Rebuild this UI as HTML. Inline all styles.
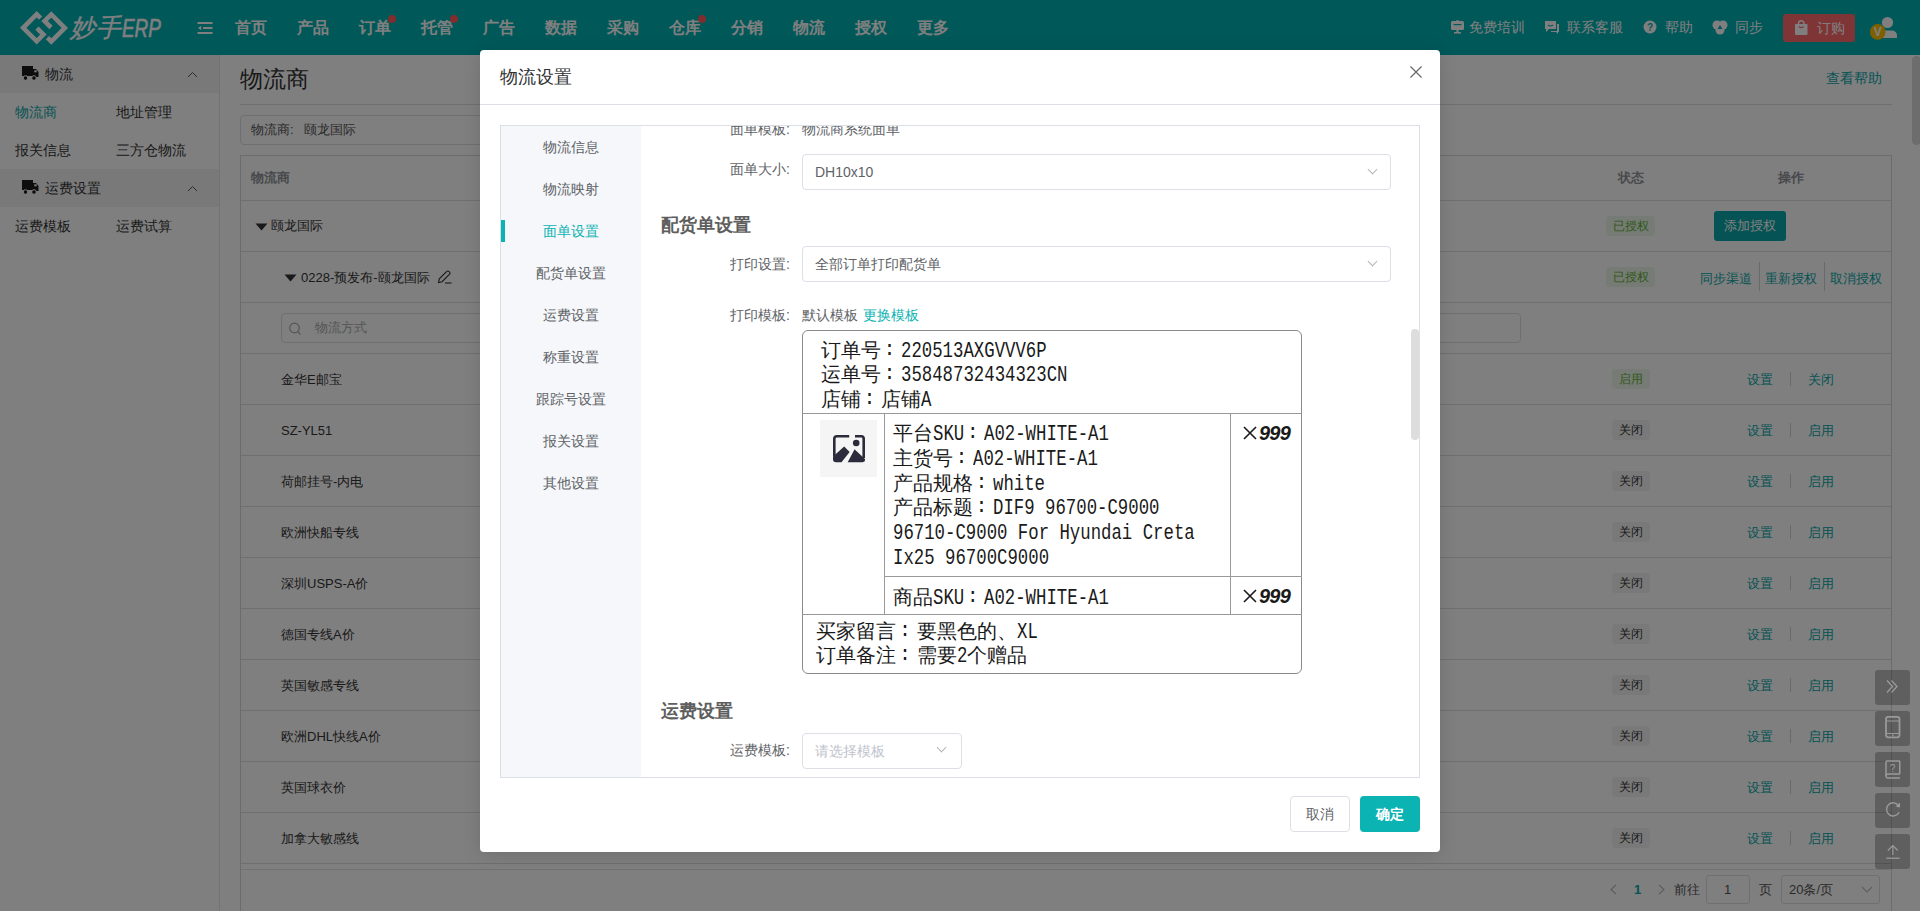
<!DOCTYPE html>
<html><head><meta charset="utf-8">
<style>
*{box-sizing:border-box;margin:0;padding:0}
html,body{width:1920px;height:911px;overflow:hidden;background:#fff;font-family:"Liberation Sans",sans-serif;font-size:14px;color:#333}
.abs{position:absolute}
.t{position:absolute;white-space:nowrap;line-height:1}
/* header */
#hdr{position:absolute;left:0;top:0;width:1920px;height:55px;background:#02b1b3}
.nav{position:absolute;top:19px;font-size:16px;font-weight:bold;color:#fff;line-height:18px}
.dot{position:absolute;width:8px;height:8px;border-radius:50%;background:#ff5a5a}
.hr{position:absolute;top:19px;font-size:14px;color:#fff;line-height:16px}
/* sidebar */
#side{position:absolute;left:0;top:55px;width:220px;height:856px;background:#fff;border-right:1px solid #e6e6e6}
.sgrp{position:absolute;left:0;width:219px;height:38px;background:#f2f3f5}
.sitem{position:absolute;font-size:14px;color:#333;line-height:16px}
/* main */
.cell{position:absolute;font-size:13px;color:#333;line-height:15px;white-space:nowrap;margin-top:1.5px}
.hline{position:absolute;height:1px;background:#dcdfe6}
.tag{position:absolute;height:20px;line-height:20px;font-size:12px;text-align:center;border-radius:4px;margin-top:-0.5px}
.tag.g{background:#eef7ea;color:#5fb236}
.tag.off{background:#f2f2f2;color:#333}
.lnk{position:absolute;font-size:13px;color:#0aa7a9;line-height:15px;white-space:nowrap;margin-top:1.5px}
.sep{position:absolute;width:1px;height:14px;background:#d0d3da;margin-top:1px}
.fb{position:absolute;left:1875px;width:35px;height:35px;border-radius:3px;background:rgba(0,0,0,.25)}
.fb svg{display:block}
#overlay{position:absolute;left:0;top:0;width:1920px;height:911px;background:rgba(0,0,0,.5)}
/* modal */
#modal{position:absolute;left:480px;top:50px;width:960px;height:802px;background:#fff;border-radius:4px;box-shadow:0 3px 18px rgba(0,0,0,.13)}
.mnav{position:absolute;left:0;width:140px;text-align:center;font-size:14px;color:#606266;line-height:16px}
.lbl{position:absolute;font-size:14px;color:#606266;line-height:16px;text-align:right;white-space:nowrap}
.sel{position:absolute;height:36px;border:1px solid #dcdfe6;border-radius:4px;background:#fff}
.sel .v{position:absolute;left:12px;top:9px;font-size:14px;color:#606266;line-height:16px;white-space:nowrap}
.chev{position:absolute;width:7px;height:7px;border-right:1px solid #b4b4b4;border-bottom:1px solid #b4b4b4;transform:rotate(45deg)}
.cn{display:inline-block;width:20.5px;font-family:"Liberation Mono",monospace;font-size:20px;text-indent:3px;vertical-align:top}
.pv{position:absolute;font-size:20px;color:#1a1a1a;line-height:24.5px;white-space:nowrap;font-family:"Liberation Sans",sans-serif}
.m{display:inline-block;vertical-align:top;overflow:visible}.m i{display:inline-block;font-style:normal;font-family:"Liberation Mono",monospace;font-size:22px;transform:scaleX(.788);transform-origin:0 0}
</style></head><body>

<!-- ============ HEADER ============ -->
<div id="hdr">
<svg class="abs" style="left:0;top:0" width="70" height="55" viewBox="0 0 70 55">
<g fill="none" stroke="#fff" stroke-width="4.6" stroke-linejoin="miter">
<polyline points="40.6,18.1 36.7,14.2 23.2,27.8 36.7,41.3 43.4,34.6 37,28.2"/>
<polyline points="47.4,37.6 51.3,41.5 64.8,27.9 51.3,14.4 44.6,21.1 51,27.5"/>
</g></svg>
<div class="t" style="left:70px;top:15px;font-size:25px;color:#fff;font-style:italic;letter-spacing:0.5px;-webkit-text-stroke:0.3px #fff">妙手</div><div class="t" style="left:122px;top:16px;font-size:25.5px;color:#fff;font-style:italic;transform:scaleX(.74);transform-origin:0 0;-webkit-text-stroke:0.6px #fff">ERP</div>
<svg class="abs" style="left:196px;top:21px" width="18" height="14" viewBox="0 0 18 14">
<rect x="1.5" y="1" width="15" height="2" fill="#fff"/><rect x="7" y="6" width="9.5" height="2" fill="#fff"/><rect x="1.5" y="11" width="15" height="2" fill="#fff"/>
<polygon points="2,7 5.2,4.8 5.2,9.2" fill="#fff"/></svg>
<div class="nav" style="left:235px">首页</div><div class="nav" style="left:297px">产品</div><div class="nav" style="left:359px">订单</div><div class="nav" style="left:421px">托管</div><div class="nav" style="left:483px">广告</div><div class="nav" style="left:545px">数据</div><div class="nav" style="left:607px">采购</div><div class="nav" style="left:669px">仓库</div><div class="nav" style="left:731px">分销</div><div class="nav" style="left:793px">物流</div><div class="nav" style="left:855px">授权</div><div class="nav" style="left:917px">更多</div>
<div class="dot" style="left:388px;top:15px"></div>
<div class="dot" style="left:450px;top:15px"></div>
<div class="dot" style="left:698px;top:15px"></div>
<!-- right items -->
<svg class="abs" style="left:1451px;top:20px" width="13" height="14" viewBox="0 0 13 14"><rect x="0" y="1" width="13" height="9" rx="1.5" fill="#fff"/><rect x="2.5" y="4" width="8" height="1.2" fill="#02b1b3"/><rect x="5.5" y="10" width="2" height="2.5" fill="#fff"/><rect x="3" y="12" width="7" height="1.5" fill="#fff"/><rect x="5.5" y="0" width="2" height="1.5" fill="#fff"/></svg>
<div class="hr" style="left:1469px">免费培训</div>
<svg class="abs" style="left:1544px;top:20px" width="16" height="15" viewBox="0 0 16 15"><path d="M1 1h11v8H5l-3 3V9H1z" fill="#fff"/><path d="M13 4h2v8h-1v2l-2-2H7v-1h6z" fill="#fff"/><path d="M4 5q2.5 2 5 0" stroke="#02b1b3" stroke-width="1.2" fill="none"/></svg>
<div class="hr" style="left:1567px">联系客服</div>
<svg class="abs" style="left:1643px;top:20px" width="14" height="14" viewBox="0 0 14 14"><circle cx="7" cy="7" r="6.5" fill="#fff"/><text x="7" y="11" font-size="10" font-weight="bold" text-anchor="middle" fill="#02b1b3" font-family="Liberation Sans">?</text></svg>
<div class="hr" style="left:1665px">帮助</div>
<svg class="abs" style="left:1712px;top:20px" width="16" height="15" viewBox="0 0 16 15"><circle cx="5" cy="5" r="4.5" fill="#fff"/><circle cx="11" cy="5" r="4.5" fill="#fff"/><circle cx="8" cy="10" r="4.5" fill="#fff"/><polygon points="8,5 10.5,9 5.5,9" fill="#02b1b3"/></svg>
<div class="hr" style="left:1735px">同步</div>
<div class="abs" style="left:1783px;top:14px;width:72px;height:28px;border-radius:3px;background:#ff6b6b"></div>
<svg class="abs" style="left:1795px;top:20px" width="13" height="15" viewBox="0 0 13 15"><rect x="0" y="4" width="12.5" height="11" rx="1" fill="#fff"/><path d="M3.5 6V3.5a2.75 2.75 0 0 1 5.5 0V6" stroke="#fff" stroke-width="1.4" fill="none"/><path d="M4 6.5q2.25 2.5 4.5 0" stroke="#ff6b6b" stroke-width="1.2" fill="none"/></svg>
<div class="hr" style="left:1817px;top:20px">订购</div>
<svg class="abs" style="left:1867px;top:16px" width="34" height="30" viewBox="0 0 34 30"><circle cx="20.5" cy="6.5" r="5.6" fill="#fff"/><path d="M13 22v-2.4a5 5 0 0 1 5-5h7a5 5 0 0 1 5 5V22z" fill="#fff"/><circle cx="10.75" cy="15.9" r="7.8" fill="#ffc000"/><text x="10.75" y="20.3" font-size="12" font-weight="bold" text-anchor="middle" fill="#fff" font-family="Liberation Sans">V</text></svg>
</div>

<!-- ============ SIDEBAR ============ -->
<div id="side">
<div class="sgrp" style="top:0"><svg class="abs" style="left:22px;top:11px" width="17" height="15" viewBox="0 0 17 15"><rect x="0" y="0" width="11" height="10" fill="#1a1a1a"/><path d="M11 3h3l2.5 3v5H11z" fill="#1a1a1a"/><rect x="12.3" y="4.3" width="2.4" height="2" fill="#fff"/><circle cx="3.5" cy="12" r="2.3" fill="#1a1a1a" stroke="#fff" stroke-width="1"/><circle cx="12" cy="12" r="2.3" fill="#1a1a1a" stroke="#fff" stroke-width="1"/></svg><div class="sitem" style="left:45px;top:11px">物流</div><svg class="abs" style="left:187px;top:16px" width="11" height="7" viewBox="0 0 11 7"><polyline points="1,6 5.5,1.5 10,6" fill="none" stroke="#555" stroke-width="1"/></svg></div>
<div class="sitem" style="left:15px;top:49px;color:#0aa7a9">物流商</div>
<div class="sitem" style="left:116px;top:49px">地址管理</div>
<div class="sitem" style="left:15px;top:87px">报关信息</div>
<div class="sitem" style="left:116px;top:87px">三方仓物流</div>
<div class="sgrp" style="top:114px"><svg class="abs" style="left:22px;top:11px" width="17" height="15" viewBox="0 0 17 15"><rect x="0" y="0" width="11" height="10" fill="#1a1a1a"/><path d="M11 3h3l2.5 3v5H11z" fill="#1a1a1a"/><rect x="12.3" y="4.3" width="2.4" height="2" fill="#fff"/><circle cx="3.5" cy="12" r="2.3" fill="#1a1a1a" stroke="#fff" stroke-width="1"/><circle cx="12" cy="12" r="2.3" fill="#1a1a1a" stroke="#fff" stroke-width="1"/></svg><div class="sitem" style="left:45px;top:11px">运费设置</div><svg class="abs" style="left:187px;top:16px" width="11" height="7" viewBox="0 0 11 7"><polyline points="1,6 5.5,1.5 10,6" fill="none" stroke="#555" stroke-width="1"/></svg></div>
<div class="sitem" style="left:15px;top:163px">运费模板</div>
<div class="sitem" style="left:116px;top:163px">运费试算</div>
</div>

<!-- ============ MAIN ============ -->
<div id="main">
<div class="abs" style="left:220px;top:55px;width:1692px;height:856px;background:#fff"></div>
<div class="t" style="left:240px;top:68px;font-size:23px;color:#333">物流商</div>
<div class="t" style="left:1826px;top:71px;font-size:14px;color:#0aa7a9">查看帮助</div>
<div class="abs" style="left:240px;top:104px;width:1652px;height:1px;background:#dcdfe6"></div>
<div class="abs" style="left:240px;top:115px;width:700px;height:30px;border:1px solid #dcdfe6;border-radius:4px"></div>
<div class="cell" style="left:251px;top:120.5px;color:#555">物流商:&nbsp;&nbsp;&nbsp;颐龙国际</div>
<!-- table -->
<div class="abs" style="left:240px;top:155px;width:1652px;height:756px;border:1px solid #d6d8de;border-bottom:none"></div>
<div class="cell" style="left:251px;top:168px;font-weight:bold;color:#909399">物流商</div>
<div class="cell" style="left:1618px;top:168px;font-weight:bold;color:#909399">状态</div>
<div class="cell" style="left:1778px;top:168px;font-weight:bold;color:#909399">操作</div>
<div class="hline" style="left:241px;top:200px;width:1650px"></div>
<svg class="abs" style="left:255px;top:223px" width="13" height="8" viewBox="0 0 13 8"><polygon points="0.5,0.5 12.5,0.5 6.5,7.5" fill="#333"/></svg>
<div class="cell" style="left:271px;top:216.5px">颐龙国际</div>
<div class="tag g" style="left:1606px;top:216.5px;width:49px">已授权</div>
<div class="abs" style="left:1714px;top:211px;width:72px;height:30px;border-radius:3px;background:#0aa7a9;color:#fff;font-size:13px;line-height:30px;text-align:center">添加授权</div>
<div class="hline" style="left:241px;top:251px;width:1650px"></div>
<svg class="abs" style="left:284px;top:274px" width="13" height="8" viewBox="0 0 13 8"><polygon points="0.5,0.5 12.5,0.5 6.5,7.5" fill="#333"/></svg>
<div class="cell" style="left:301px;top:268px">0228-预发布-颐龙国际</div>
<svg class="abs" style="left:436px;top:269px" width="16" height="15" viewBox="0 0 16 15"><path d="M2.5 13.5l0.8-3.6 7.5-7.5a1.4 1.4 0 0 1 2 0l0.8 0.8a1.4 1.4 0 0 1 0 2l-7.5 7.5z" fill="none" stroke="#333" stroke-width="1.1"/><line x1="9" y1="14" x2="15.5" y2="14" stroke="#333" stroke-width="1.1"/></svg>
<div class="tag g" style="left:1606px;top:267.5px;width:49px">已授权</div>
<div class="lnk" style="left:1700px;top:269px">同步渠道</div><div class="sep" style="left:1759px;top:262px;height:29px;margin-top:0"></div>
<div class="lnk" style="left:1765px;top:269px">重新授权</div><div class="sep" style="left:1824px;top:262px;height:29px;margin-top:0"></div>
<div class="lnk" style="left:1830px;top:269px">取消授权</div>
<div class="hline" style="left:241px;top:302px;width:1650px"></div>
<div class="abs" style="left:281px;top:313px;width:1240px;height:30px;border:1px solid #dcdfe6;border-radius:4px"></div>
<svg class="abs" style="left:288px;top:322px" width="14" height="14" viewBox="0 0 14 14"><circle cx="6.5" cy="6" r="4.8" fill="none" stroke="#aaa" stroke-width="1.2"/><line x1="9.7" y1="9.7" x2="12.5" y2="12.5" stroke="#aaa" stroke-width="1.2"/></svg>
<div class="cell" style="left:315px;top:318.5px;color:#aaa">物流方式</div>
<div class="hline" style="left:241px;top:353px;width:1650px"></div><div class="cell" style="left:281px;top:370px">金华E邮宝</div><div class="tag g" style="left:1612px;top:369px;width:38px">启用</div><div class="lnk" style="left:1747px;top:370px">设置</div><div class="sep" style="left:1790px;top:371px"></div><div class="lnk" style="left:1808px;top:370px">关闭</div><div class="hline" style="left:241px;top:404px;width:1650px"></div><div class="cell" style="left:281px;top:421px">SZ-YL51</div><div class="tag off" style="left:1612px;top:420px;width:38px">关闭</div><div class="lnk" style="left:1747px;top:421px">设置</div><div class="sep" style="left:1790px;top:422px"></div><div class="lnk" style="left:1808px;top:421px">启用</div><div class="hline" style="left:241px;top:455px;width:1650px"></div><div class="cell" style="left:281px;top:472px">荷邮挂号-内电</div><div class="tag off" style="left:1612px;top:471px;width:38px">关闭</div><div class="lnk" style="left:1747px;top:472px">设置</div><div class="sep" style="left:1790px;top:473px"></div><div class="lnk" style="left:1808px;top:472px">启用</div><div class="hline" style="left:241px;top:506px;width:1650px"></div><div class="cell" style="left:281px;top:523px">欧洲快船专线</div><div class="tag off" style="left:1612px;top:522px;width:38px">关闭</div><div class="lnk" style="left:1747px;top:523px">设置</div><div class="sep" style="left:1790px;top:524px"></div><div class="lnk" style="left:1808px;top:523px">启用</div><div class="hline" style="left:241px;top:557px;width:1650px"></div><div class="cell" style="left:281px;top:574px">深圳USPS-A价</div><div class="tag off" style="left:1612px;top:573px;width:38px">关闭</div><div class="lnk" style="left:1747px;top:574px">设置</div><div class="sep" style="left:1790px;top:575px"></div><div class="lnk" style="left:1808px;top:574px">启用</div><div class="hline" style="left:241px;top:608px;width:1650px"></div><div class="cell" style="left:281px;top:625px">德国专线A价</div><div class="tag off" style="left:1612px;top:624px;width:38px">关闭</div><div class="lnk" style="left:1747px;top:625px">设置</div><div class="sep" style="left:1790px;top:626px"></div><div class="lnk" style="left:1808px;top:625px">启用</div><div class="hline" style="left:241px;top:659px;width:1650px"></div><div class="cell" style="left:281px;top:676px">英国敏感专线</div><div class="tag off" style="left:1612px;top:675px;width:38px">关闭</div><div class="lnk" style="left:1747px;top:676px">设置</div><div class="sep" style="left:1790px;top:677px"></div><div class="lnk" style="left:1808px;top:676px">启用</div><div class="hline" style="left:241px;top:710px;width:1650px"></div><div class="cell" style="left:281px;top:727px">欧洲DHL快线A价</div><div class="tag off" style="left:1612px;top:726px;width:38px">关闭</div><div class="lnk" style="left:1747px;top:727px">设置</div><div class="sep" style="left:1790px;top:728px"></div><div class="lnk" style="left:1808px;top:727px">启用</div><div class="hline" style="left:241px;top:761px;width:1650px"></div><div class="cell" style="left:281px;top:778px">英国球衣价</div><div class="tag off" style="left:1612px;top:777px;width:38px">关闭</div><div class="lnk" style="left:1747px;top:778px">设置</div><div class="sep" style="left:1790px;top:779px"></div><div class="lnk" style="left:1808px;top:778px">启用</div><div class="hline" style="left:241px;top:812px;width:1650px"></div><div class="cell" style="left:281px;top:829px">加拿大敏感线</div><div class="tag off" style="left:1612px;top:828px;width:38px">关闭</div><div class="lnk" style="left:1747px;top:829px">设置</div><div class="sep" style="left:1790px;top:830px"></div><div class="lnk" style="left:1808px;top:829px">启用</div>
<div class="hline" style="left:241px;top:863px;width:1650px"></div>
<div class="hline" style="left:241px;top:869px;width:1650px;background:#e2e4ea"></div>
<!-- pagination -->
<svg class="abs" style="left:1609px;top:884px" width="9" height="11" viewBox="0 0 9 11"><polyline points="7,1 2,5.5 7,10" fill="none" stroke="#bbb" stroke-width="1.2"/></svg>
<div class="cell" style="left:1634px;top:880.5px;font-weight:bold;color:#0aa7a9">1</div>
<svg class="abs" style="left:1657px;top:884px" width="9" height="11" viewBox="0 0 9 11"><polyline points="2,1 7,5.5 2,10" fill="none" stroke="#bbb" stroke-width="1.2"/></svg>
<div class="cell" style="left:1674px;top:880.5px;color:#555">前往</div>
<div class="abs" style="left:1706px;top:875px;width:44px;height:29px;border:1px solid #dcdfe6;border-radius:3px"></div>
<div class="cell" style="left:1724px;top:880.5px;color:#555">1</div>
<div class="cell" style="left:1759px;top:880.5px;color:#555">页</div>
<div class="abs" style="left:1781px;top:875px;width:99px;height:29px;border:1px solid #dcdfe6;border-radius:3px"></div>
<div class="cell" style="left:1789px;top:880.5px;color:#555">20条/页</div>
<svg class="abs" style="left:1861px;top:886px" width="12" height="7" viewBox="0 0 12 7"><polyline points="1,1 6,6 11,1" fill="none" stroke="#bbb" stroke-width="1.1"/></svg>
<!-- page scrollbar -->
<div class="abs" style="left:1912px;top:56px;width:9px;height:89px;border-radius:4.5px;background:#dadada"></div>
</div>

<div id="overlay"></div>
<!-- floating buttons (above overlay) -->
<div class="fb" style="top:670px"><svg width="35" height="35" viewBox="0 0 35 35"><polyline points="12,10.5 17.5,16.5 12,22.5" fill="none" stroke="#9a9a9a" stroke-width="1.3"/><polyline points="16.5,10.5 22,16.5 16.5,22.5" fill="none" stroke="#9a9a9a" stroke-width="1.3"/></svg></div>
<div class="fb" style="top:711px"><svg width="35" height="35" viewBox="0 0 35 35"><rect x="11" y="5.8" width="13.5" height="20.5" rx="2.2" fill="none" stroke="#9a9a9a" stroke-width="1.8"/><rect x="11.5" y="9.5" width="12.5" height="1" fill="#9a9a9a"/><rect x="11.5" y="22" width="12.5" height="1" fill="#9a9a9a"/><circle cx="17.7" cy="24.3" r="0.9" fill="#9a9a9a"/></svg></div>
<div class="fb" style="top:752px"><svg width="35" height="35" viewBox="0 0 35 35"><path d="M25 9H12.2Q11 9 11 10.2V24" fill="none" stroke="#9a9a9a" stroke-width="1.5"/><path d="M11 24Q11 22 13 22H25M11 24Q11 26 13 26H25" fill="none" stroke="#9a9a9a" stroke-width="1.3"/><rect x="24" y="9" width="1.5" height="13" fill="#9a9a9a"/><text x="17.5" y="19.5" font-size="10" text-anchor="middle" fill="#9a9a9a" font-family="Liberation Sans">?</text></svg></div>
<div class="fb" style="top:793px"><svg width="35" height="35" viewBox="0 0 35 35"><path d="M23.5 12.5A6.6 6.6 0 1 0 24.2 19" fill="none" stroke="#9a9a9a" stroke-width="1.3"/><polygon points="25,9.5 25,14.5 20.5,13.5" fill="#9a9a9a"/></svg></div>
<div class="fb" style="top:834px"><svg width="35" height="35" viewBox="0 0 35 35"><polyline points="12.8,16.5 17.8,11.5 22.8,16.5" fill="none" stroke="#9a9a9a" stroke-width="1.2"/><line x1="17.8" y1="11.8" x2="17.8" y2="21" stroke="#9a9a9a" stroke-width="1.2"/><line x1="11.3" y1="24.2" x2="24.6" y2="24.2" stroke="#9a9a9a" stroke-width="1.3"/></svg></div>


<!-- ============ MODAL ============ -->
<div id="modal">
<div class="t" style="left:20px;top:18px;font-size:18px;color:#303133">物流设置</div>
<svg class="abs" style="left:929px;top:15px" width="14" height="14" viewBox="0 0 14 14"><path d="M1.5 1.5L12.5 12.5M12.5 1.5L1.5 12.5" stroke="#666" stroke-width="1.2"/></svg>
<div class="abs" style="left:0;top:54px;width:960px;height:1px;background:#dcdfe6"></div>
<div class="abs" style="left:20px;top:75px;width:920px;height:653px;border:1px solid #dcdfe6;overflow:hidden">
 <div class="abs" style="left:0;top:0;width:140px;height:651px;background:#f5f7fa"></div>
</div>
<div class="abs" style="left:21px;top:170px;width:4px;height:22px;background:#0bb3b3"></div>
<div style="position:absolute;left:21px;top:0"><div class="mnav" style="top:89px;">物流信息</div><div class="mnav" style="top:131px;">物流映射</div><div class="mnav" style="top:173px;color:#0bb3b3">面单设置</div><div class="mnav" style="top:215px;">配货单设置</div><div class="mnav" style="top:257px;">运费设置</div><div class="mnav" style="top:299px;">称重设置</div><div class="mnav" style="top:341px;">跟踪号设置</div><div class="mnav" style="top:383px;">报关设置</div><div class="mnav" style="top:425px;">其他设置</div></div>
<!-- content clip -->
<div class="abs" style="left:161px;top:76px;width:778px;height:651px;overflow:hidden">
 <div style="position:absolute;left:-161px;top:-76px;width:960px;height:800px">
  <div class="lbl" style="left:230px;top:71px;width:80px">面单模板:</div>
  <div class="lbl" style="left:322px;top:71px;text-align:left">物流商系统面单</div>
 </div>
</div>
<div class="lbl" style="left:230px;top:111px;width:80px">面单大小:</div>
<div class="sel" style="left:322px;top:104px;width:589px"><div class="v">DH10x10</div><div class="chev" style="left:566px;top:11px"></div></div>
<div class="t" style="left:181px;top:166px;font-size:18px;font-weight:bold;color:#5e5e5e">配货单设置</div>
<div class="lbl" style="left:230px;top:206px;width:80px">打印设置:</div>
<div class="sel" style="left:322px;top:196px;width:589px"><div class="v">全部订单打印配货单</div><div class="chev" style="left:566px;top:11px"></div></div>
<div class="lbl" style="left:230px;top:257px;width:80px">打印模板:</div>
<div class="lbl" style="left:322px;top:257px;text-align:left;color:#606266">默认模板</div>
<div class="lbl" style="left:383px;top:257px;text-align:left;color:#0bb3b3">更换模板</div>
<!-- preview box -->
<div class="abs" style="left:322px;top:280px;width:500px;height:344px;border:1.4px solid #8a8a8a;border-radius:6px"></div>
<div class="abs" style="left:322px;top:363px;width:500px;height:1.3px;background:#999"></div>
<div class="abs" style="left:322px;top:564px;width:500px;height:1.3px;background:#999"></div>
<div class="abs" style="left:403.8px;top:364px;width:1.3px;height:200px;background:#999"></div>
<div class="abs" style="left:749.5px;top:364px;width:1.3px;height:200px;background:#999"></div>
<div class="abs" style="left:404px;top:526px;width:418px;height:1.3px;background:#999"></div>
<div class="abs" style="left:340px;top:370px;width:57px;height:57px;background:#f5f5f5"></div>
<svg class="abs" style="left:353px;top:385px" width="32" height="28" viewBox="0 0 32 28"><g fill="#2b2b3b"><path d="M16.2,1.3H3.8Q1.3,1.3 1.3,3.8V21" stroke="#2b2b3b" stroke-width="2.6" fill="none"/><path d="M22,1.3H28.2Q30.7,1.3 30.7,3.8V23" stroke="#2b2b3b" stroke-width="2.6" fill="none"/><path d="M0,21.5L11.2,11.5L16.6,16.9L8.5,27.2H3Q0,27.2 0,24.2z"/><path d="M14.7,27.2L21.6,14.2L22.8,15.4L32,24V24.7Q32,27.2 29,27.2z"/><circle cx="23.2" cy="8" r="3.3"/></g></svg>
<div class="pv" style="left:340.5px;top:288.4px;">订单号<span class="cn">:</span><span class="m" style="width:145.60px"><i>220513AXGVVV6P</i></span></div><div class="pv" style="left:340.5px;top:312.4px;">运单号<span class="cn">:</span><span class="m" style="width:166.40px"><i>35848732434323CN</i></span></div><div class="pv" style="left:340.5px;top:336.8px;">店铺<span class="cn">:</span>店铺<span class="m" style="width:10.40px"><i>A</i></span></div><div class="pv" style="left:412.5px;top:371.4px;">平台<span class="m" style="width:31.20px"><i>SKU</i></span><span class="cn">:</span><span class="m" style="width:124.80px"><i>A02-WHITE-A1</i></span></div><div class="pv" style="left:412.5px;top:395.9px;">主货号<span class="cn">:</span><span class="m" style="width:124.80px"><i>A02-WHITE-A1</i></span></div><div class="pv" style="left:412.5px;top:420.6px;">产品规格<span class="cn">:</span><span class="m" style="width:52.00px"><i>white</i></span></div><div class="pv" style="left:412.5px;top:445.1px;">产品标题<span class="cn">:</span><span class="m" style="width:166.40px"><i>DIF9&nbsp;96700-C9000</i></span></div><div class="pv" style="left:412.5px;top:470.1px;"><span class="m" style="width:301.60px"><i>96710-C9000&nbsp;For&nbsp;Hyundai&nbsp;Creta</i></span></div><div class="pv" style="left:412.5px;top:495.4px;"><span class="m" style="width:156.00px"><i>Ix25&nbsp;96700C9000</i></span></div><div class="pv" style="left:412.5px;top:534.8px;">商品<span class="m" style="width:31.20px"><i>SKU</i></span><span class="cn">:</span><span class="m" style="width:124.80px"><i>A02-WHITE-A1</i></span></div><svg class="abs" style="left:763px;top:375.5px" width="14" height="14" viewBox="0 0 14 14"><path d="M1 1L13 13M13 1L1 13" stroke="#1a1a1a" stroke-width="1.6"/></svg><div class="t" style="left:779px;top:373px;font-size:20px;font-weight:bold;font-style:italic;letter-spacing:-0.8px;color:#1a1a1a">999</div><svg class="abs" style="left:763px;top:538.5px" width="14" height="14" viewBox="0 0 14 14"><path d="M1 1L13 13M13 1L1 13" stroke="#1a1a1a" stroke-width="1.6"/></svg><div class="t" style="left:779px;top:536px;font-size:20px;font-weight:bold;font-style:italic;letter-spacing:-0.8px;color:#1a1a1a">999</div><div class="pv" style="left:336.0px;top:568.5px;">买家留言<span class="cn">:</span>要黑色的、<span class="m" style="width:20.80px"><i>XL</i></span></div><div class="pv" style="left:336.0px;top:593.4px;">订单备注<span class="cn">:</span>需要<span class="m" style="width:10.40px"><i>2</i></span>个赠品</div>
<div class="t" style="left:181px;top:652px;font-size:18px;font-weight:bold;color:#5e5e5e">运费设置</div>
<div class="lbl" style="left:230px;top:692px;width:80px">运费模板:</div>
<div class="sel" style="left:322px;top:683px;width:160px;height:36px"><div class="v" style="top:9px;color:#c0c4cc">请选择模板</div><div class="chev" style="left:135px;top:10px"></div></div>
<div class="abs" style="left:931px;top:279px;width:8px;height:111px;border-radius:4px;background:#ddd"></div>
<div class="abs" style="left:810px;top:746px;width:60px;height:36px;border:1px solid #dcdfe6;border-radius:4px;font-size:14px;color:#606266;line-height:34px;text-align:center">取消</div>
<div class="abs" style="left:880px;top:746px;width:60px;height:36px;border-radius:4px;background:#0bb3b3;font-size:14px;color:#fff;line-height:36px;text-align:center;font-weight:bold">确定</div>
</div>

</body></html>
